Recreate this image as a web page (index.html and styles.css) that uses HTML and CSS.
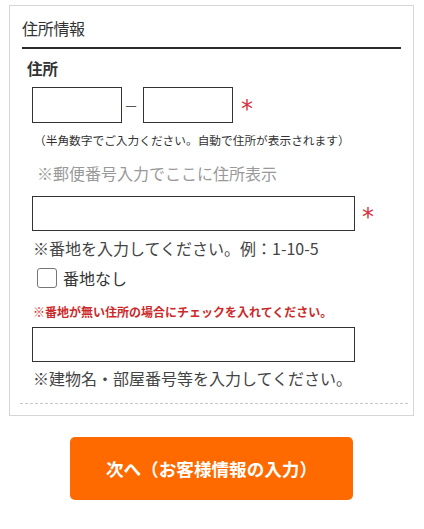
FILE: index.html
```html
<!DOCTYPE html>
<html lang="ja">
<head>
<meta charset="utf-8">
<link rel="stylesheet" href="styles.css">
</head>
<body>
<div class="box">
  <div class="title">住所情報</div>
  <div class="label">住所</div>
  <div class="zip-row">
    <span class="input zip"></span>
    <span class="dash">－</span>
    <span class="input zip"></span>
    <span class="req">*</span>
  </div>
  <div class="small-note">（半角数字でご入力ください。自動で住所が表示されます）</div>
  <div class="auto-addr">※郵便番号入力でここに住所表示</div>
  <div class="field-row">
    <span class="input wide"></span>
    <span class="req req-wide">*</span>
  </div>
  <div class="hint">※番地を入力してください。例：1-10-5</div>
  <label class="check-row">
    <span class="checkbox"></span>
    <span class="check-label">番地なし</span>
  </label>
  <div class="warn">※番地が無い住所の場合にチェックを入れてください。</div>
  <div class="field-row field-row-2">
    <span class="input wide"></span>
  </div>
  <div class="hint hint-2">※建物名・部屋番号等を入力してください。</div>
  <div class="dashed"></div>
</div>
<div class="btn-wrap">
  <div class="btn">次へ（お客様情報の入力）</div>
</div>
</body>
</html>
```

FILE: styles.css
```css
* { box-sizing: border-box; }
body {
  margin: 0;
  background: #fff;
  font-family: "Noto Sans CJK JP", "Noto Sans", sans-serif;
  color: #333;
}
.box {
  margin: 5px 10px 0 9px;
  width: 405px;
  border: 1px solid #d6d6d6;
  padding: 0 12px 11px 12px;
}
.title {
  padding-top: 11px;
  padding-bottom: 8px;
  line-height: 22px;
  font-size: 16px;
  color: #333;
  border-bottom: 2px solid #2b2b2b;
  letter-spacing: -0.3px;
}
.label {
  margin-top: 8px;
  padding-left: 5px;
  line-height: 22px;
  font-size: 15.5px;
  font-weight: bold;
  color: #333;
}
.zip-row {
  margin-top: 8px;
  padding-left: 10px;
  height: 36px;
  display: flex;
  align-items: center;
}
.input {
  display: block;
  border: 1px solid #333;
  background: #fff;
}
.zip { width: 90px; height: 36px; }
.dash {
  width: 21px;
  padding-right: 3px;
  text-align: center;
  font-size: 14px;
  color: #555;
  line-height: 36px;
}
.req {
  color: #d8323c;
  font-size: 24px;
  line-height: 36px;
  margin-left: 8px;
  font-family: "DejaVu Sans", sans-serif;
  padding-top: 7px;
}
.req-wide { margin-left: 7px; }
.small-note {
  margin-top: 8px;
  padding-left: 12px;
  line-height: 18px;
  font-size: 11.7px;
  color: #333;
  white-space: nowrap;
}
.auto-addr {
  margin-top: 12px;
  padding-left: 15px;
  line-height: 24px;
  font-size: 16px;
  color: #999;
}
.field-row {
  margin-top: 11px;
  padding-left: 10px;
  height: 35px;
  display: flex;
  align-items: center;
}
.wide { width: 323px; height: 35px; }
.hint {
  margin-top: 5px;
  padding-left: 11px;
  line-height: 24px;
  font-size: 16px;
  color: #444;
  white-space: nowrap;
}
.hint-2 { margin-top: 4px; }
.check-row {
  margin-top: 6px;
  padding-left: 15px;
  height: 24px;
  display: flex;
  align-items: center;
}
.checkbox {
  width: 20px;
  height: 20px;
  border: 1px solid #767676;
  border-radius: 3px;
  background: #fff;
}
.check-label {
  margin-left: 6px;
  font-size: 16px;
  line-height: 24px;
  color: #333;
}
.warn {
  margin-top: 13px;
  padding-left: 11px;
  line-height: 18px;
  font-size: 12px;
  font-weight: bold;
  color: #cc2a2a;
  white-space: nowrap;
}
.field-row-2 { margin-top: 6px; }
.dashed {
  margin: 13px -7px 0 -2px;
  border-top: 1px dashed #c8c8c8;
}
.btn-wrap {
  width: 405px;
  margin-left: 9px;
  margin-top: 21px;
  display: flex;
  justify-content: center;
}
.btn {
  width: 283px;
  height: 63px;
  background: #ff6a00;
  border-radius: 5px;
  color: #fff;
  font-size: 17.6px;
  font-weight: bold;
  display: flex;
  align-items: center;
  justify-content: center;
}
```
